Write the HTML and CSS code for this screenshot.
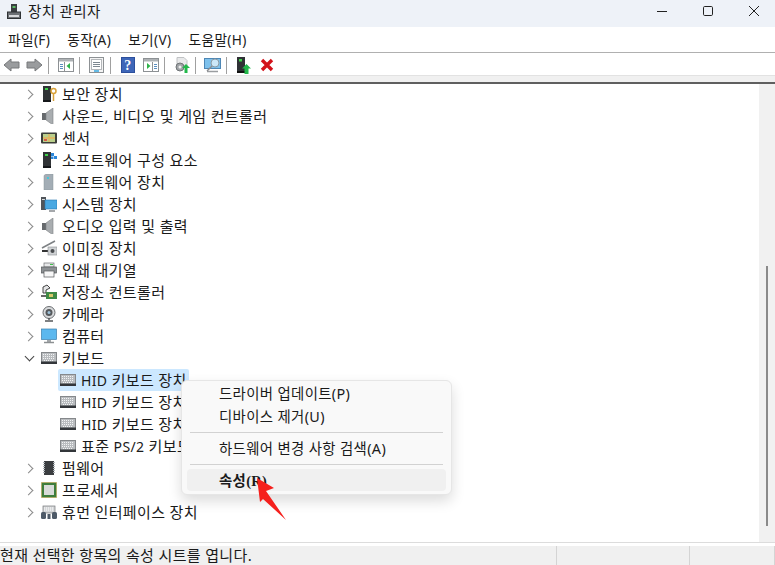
FILE: index.html
```html
<!DOCTYPE html>
<html lang="ko">
<head>
<meta charset="utf-8">
<title>장치 관리자</title>
<link rel="stylesheet" href="styles.css">
</head>
<body>
<svg class="defs" width="0" height="0">
  <defs>
    <symbol id="kbd" viewBox="0 0 16 16">
      <rect x="0.5" y="2.500" width="15" height="10" fill="#b9bcbf" stroke="#85888b"/>
      <rect x="0" y="11.500" width="16" height="2.500" fill="#33363a"/>
      <path d="M2 4.500h12M2 6.500h12M2 8.500h12M3 10.500h10" stroke="#f2f3f4" stroke-dasharray="1 1"/>
    </symbol>
    <symbol id="speaker" viewBox="0 0 16 16">
      <path d="M1 5h4v7H1z" fill="#666a6d"/>
      <path d="M5 5l7-5v17l-7-5z" fill="#a9adb0" stroke="#7d8184" stroke-width=".6"/>
    </symbol>
    <symbol id="tower" viewBox="0 0 16 16">
      <rect x="2" y="0" width="8" height="14" fill="#303336"/>
      <rect x="2" y="14" width="8" height="2" fill="#15171a"/>
      <rect x="4" y="2" width="3" height="2" fill="#3fd04a"/>
    </symbol>
  </defs>
</svg>

<div class="window">
  <header class="titlebar">
    <svg class="title-icon" width="14" height="15" viewBox="0 0 14 15">
      <rect x="4" y="0" width="6" height="8" fill="#3a3d40"/>
      <rect x="5.500" y="2" width="3" height="2" fill="#5dbb63"/>
      <rect x="0.500" y="8" width="13" height="6.500" fill="#6c7074" stroke="#2f3234"/>
      <rect x="2" y="11" width="10" height="2" fill="#d7d9db"/>
    </svg>
    <span class="title-text">장치 관리자</span>
    <div class="window-controls">
      <svg width="12" height="12" viewBox="0 0 12 12"><path d="M1 6.500h10" stroke="#222" stroke-width="1"/></svg>
      <svg width="12" height="12" viewBox="0 0 12 12"><rect x="1.500" y="1.500" width="9" height="9" rx="1.200" fill="none" stroke="#222"/></svg>
      <svg width="12" height="12" viewBox="0 0 12 12"><path d="M1 1l10 10M11 1L1 11" stroke="#222" stroke-width="1"/></svg>
    </div>
  </header>

  <nav class="menubar">
    <span class="menu-item">파일(F)</span>
    <span class="menu-item">동작(A)</span>
    <span class="menu-item">보기(V)</span>
    <span class="menu-item">도움말(H)</span>
  </nav>

  <div class="toolbar">
    <span class="tool"><svg width="17" height="14" viewBox="0 0 17 14"><path d="M1 7l7-6v3h8v6H8v3z" fill="#9a9c9e" stroke="#77797b"/></svg></span>
    <span class="tool"><svg width="17" height="14" viewBox="0 0 17 14"><path d="M16 7L9 1v3H1v6h8v3z" fill="#9a9c9e" stroke="#77797b"/></svg></span>
    <span class="tool-sep"></span>
    <span class="tool"><svg width="16" height="14" viewBox="0 0 16 14"><rect x=".5" y=".5" width="15" height="13" fill="#fff" stroke="#8d9194"/><rect x="1" y="1" width="14" height="2.500" fill="#aeb2b5"/><path d="M6.500 4v9" stroke="#8d9194"/><path d="M2 6.500h3M2 8.500h3M2 10.500h3" stroke="#5a8fc0"/><path d="M12 5v6L8.500 8z" fill="#2fb34a"/></svg></span>
    <span class="tool-sep"></span>
    <span class="tool"><svg width="15" height="16" viewBox="0 0 15 16"><rect x=".5" y=".5" width="14" height="15" fill="#f4f4f4" stroke="#8d9194"/><rect x="2.500" y="2.500" width="10" height="10" fill="#fff" stroke="#b4b7ba"/><path d="M4 5.500h7M4 7.500h7M4 9.500h7" stroke="#7d8790"/><path d="M5 14h5" stroke="#35a7e0" stroke-width="1.500"/></svg></span>
    <span class="tool-sep"></span>
    <span class="tool"><svg width="14" height="16" viewBox="0 0 14 16"><rect width="14" height="16" fill="#2c4f9c"/><rect x="1" y="1" width="12" height="14" fill="#3e66b8"/><text x="7" y="13" class="help-mark">?</text></svg></span>
    <span class="tool"><svg width="16" height="14" viewBox="0 0 16 14"><rect x=".5" y=".5" width="15" height="13" fill="#fff" stroke="#8d9194"/><rect x="1" y="1" width="14" height="2.500" fill="#aeb2b5"/><path d="M9.500 4v9" stroke="#8d9194"/><path d="M11 6.500h3M11 8.500h3M11 10.500h3" stroke="#5a8fc0"/><path d="M4 5v6l3.500-3z" fill="#2fb34a"/></svg></span>
    <span class="tool-sep"></span>
    <span class="tool"><svg width="16" height="16" viewBox="0 0 16 16"><path d="M3 .5h7l3 3V9H3z" fill="#e8e9ea" stroke="#c0c2c4"/><circle cx="6" cy="10" r="4" fill="#9fa3a6" stroke="#707477"/><circle cx="6" cy="10" r="1.500" fill="#eee"/><path d="M12 7l4 4h-2.500v5h-3v-5H8z" fill="#22b84a"/></svg></span>
    <span class="tool-sep"></span>
    <span class="tool"><svg width="17" height="16" viewBox="0 0 17 16"><rect x=".5" y="1.500" width="16" height="10" fill="#7ec1ec" stroke="#4e87b5"/><path d="M3 14.500h11" stroke="#9a9da0" stroke-width="1.500"/><circle cx="11" cy="6" r="4" fill="#cbe7f8" stroke="#8a9aa5"/><path d="M8 9l-5 5" stroke="#8b8d8f" stroke-width="1.500"/></svg></span>
    <span class="tool-sep"></span>
    <span class="tool"><svg width="15" height="17" viewBox="0 0 15 17"><rect x="1" y="0" width="8" height="14" fill="#2f3235"/><rect x="1" y="14" width="9" height="2" fill="#111"/><rect x="3" y="2" width="3" height="2.500" fill="#3fd04a"/><path d="M10.500 7l4.500 4.500h-2.500V17h-4v-5.500H6z" fill="#22b84a"/></svg></span>
    <span class="tool"><svg width="14" height="14" viewBox="0 0 14 14"><path d="M2 2l10 10M12 2L2 12" stroke="#d3121a" stroke-width="3.400"/></svg></span>
  </div>
  <div class="strip"></div>

  <div class="content">
    <main class="tree">
      <div class="row"><i class="chev"></i>
        <svg class="ico" viewBox="0 0 16 16"><use href="#tower"/><circle cx="12.500" cy="5" r="2.500" fill="none" stroke="#d9a23a" stroke-width="1.500"/><path d="M12.500 7.500V15" stroke="#d9a23a" stroke-width="1.500"/></svg>
        <span>보안 장치</span></div>
      <div class="row"><i class="chev"></i><svg class="ico" viewBox="0 0 16 16"><use href="#speaker"/></svg><span>사운드, 비디오 및 게임 컨트롤러</span></div>
      <div class="row"><i class="chev"></i>
        <svg class="ico" viewBox="0 0 16 16"><rect y="2.500" width="16" height="11" rx="1" fill="#3c3f3a"/><rect x="2" y="4" width="12" height="8" fill="#b9cf8c"/><path d="M8 4v8M2 8h12" stroke="#e6b35a" stroke-width="1.300"/><rect x="3" y="9" width="3" height="2" fill="#d85a4a"/></svg>
        <span>센서</span></div>
      <div class="row"><i class="chev"></i>
        <svg class="ico" viewBox="0 0 16 16"><use href="#tower"/><rect x="10" y="1" width="3" height="3" fill="#2b86d9"/><rect x="13" y="4" width="3" height="3" fill="#2b86d9"/><rect x="10" y="4.500" width="2.500" height="2.500" fill="#2b86d9"/></svg>
        <span>소프트웨어 구성 요소</span></div>
      <div class="row"><i class="chev"></i>
        <svg class="ico" viewBox="0 0 16 16"><path d="M3 1.500L5 0h7v16H3z" fill="#a3adb5" stroke="#8a949b" stroke-width=".5"/><rect x="6" y="3" width="2" height="2" fill="#47c6d8"/></svg>
        <span>소프트웨어 장치</span></div>
      <div class="row"><i class="chev"></i>
        <svg class="ico" viewBox="0 0 16 16"><rect x="0" y="1" width="5" height="13" fill="#50555a"/><rect x="1" y="3" width="3" height="1" fill="#ddd"/><rect x="4" y="4" width="12" height="9" fill="#49a8e2" stroke="#2a77ae" stroke-width=".6"/><path d="M8 15h6" stroke="#8f9396" stroke-width="1.600"/></svg>
        <span>시스템 장치</span></div>
      <div class="row"><i class="chev"></i><svg class="ico" viewBox="0 0 16 16"><use href="#speaker"/></svg><span>오디오 입력 및 출력</span></div>
      <div class="row"><i class="chev"></i>
        <svg class="ico" viewBox="0 0 16 16"><path d="M1 8L14 1" stroke="#7d8184" stroke-width="1.500"/><path d="M1 11h8" stroke="#333" stroke-width="2"/><rect x="7" y="7" width="9" height="8" fill="#cfd2d4" stroke="#8b8e91" stroke-width=".6"/><circle cx="11.500" cy="11" r="2" fill="#4a4d50"/></svg>
        <span>이미징 장치</span></div>
      <div class="row"><i class="chev"></i>
        <svg class="ico" viewBox="0 0 16 16"><rect x="3" y="1" width="10" height="4" fill="#e8e9ea" stroke="#6d7073" stroke-width=".7"/><rect x="0.500" y="5" width="15" height="6" fill="#8d9194" stroke="#55585b" stroke-width=".7"/><rect x="3" y="9" width="10" height="6" fill="#f7f7f7" stroke="#55585b" stroke-width=".7"/><rect x="9" y="2" width="3" height="1" fill="#3fc04a"/></svg>
        <span>인쇄 대기열</span></div>
      <div class="row"><i class="chev"></i>
        <svg class="ico" viewBox="0 0 16 16"><path d="M2 9V3l4-2 3 3-4 2v3z" fill="#e4e5e6" stroke="#333" stroke-width=".9"/><path d="M0 12h7" stroke="#333" stroke-width="1.500"/><rect x="5" y="8" width="11" height="7" fill="#3f8a45"/><rect x="8" y="10" width="4" height="3" fill="#d7c86a"/></svg>
        <span>저장소 컨트롤러</span></div>
      <div class="row"><i class="chev"></i>
        <svg class="ico" viewBox="0 0 16 16"><circle cx="8" cy="6.500" r="6" fill="#d8dadc" stroke="#6a6d70"/><circle cx="8" cy="6.500" r="3.500" fill="#55585b"/><circle cx="8" cy="6.500" r="1.500" fill="#9cc0d8"/><path d="M8 12v2M4 15h8" stroke="#55585b" stroke-width="1.500"/></svg>
        <span>카메라</span></div>
      <div class="row"><i class="chev"></i>
        <svg class="ico" viewBox="0 0 16 16"><rect x=".5" y="1" width="15" height="10.500" fill="#5cb8ee" stroke="#3a7fae" stroke-width=".7"/><path d="M6 12h4v2H6z" fill="#a3a7aa"/><path d="M3 14.500h10" stroke="#8c9093" stroke-width="1.500"/></svg>
        <span>컴퓨터</span></div>
      <div class="row"><i class="chev open"></i><svg class="ico" viewBox="0 0 16 16"><use href="#kbd"/></svg><span>키보드</span></div>
      <div class="row child"><div class="child-inner selected"><svg class="ico" viewBox="0 0 16 16"><use href="#kbd"/></svg><span><span class="latin">HID</span> 키보드 장치</span></div></div>
      <div class="row child"><div class="child-inner"><svg class="ico" viewBox="0 0 16 16"><use href="#kbd"/></svg><span><span class="latin">HID</span> 키보드 장치</span></div></div>
      <div class="row child"><div class="child-inner"><svg class="ico" viewBox="0 0 16 16"><use href="#kbd"/></svg><span><span class="latin">HID</span> 키보드 장치</span></div></div>
      <div class="row child"><div class="child-inner"><svg class="ico" viewBox="0 0 16 16"><use href="#kbd"/></svg><span>표준 <span class="latin">PS/2</span> 키보드</span></div></div>
      <div class="row"><i class="chev"></i>
        <svg class="ico" viewBox="0 0 16 16"><rect x="3" y="1" width="10" height="14" fill="#3a3d40"/><path d="M3 2v12M13 2v12" stroke="#aab0b4" stroke-width="2" stroke-dasharray="1 1"/></svg>
        <span>펌웨어</span></div>
      <div class="row"><i class="chev"></i>
        <svg class="ico" viewBox="0 0 16 16"><rect x=".5" y=".5" width="15" height="15" fill="#3e7d3c" stroke="#c09c3a" stroke-dasharray="1 1"/><rect x="3" y="3" width="10" height="10" fill="#d8dbd8"/></svg>
        <span>프로세서</span></div>
      <div class="row"><i class="chev"></i>
        <svg class="ico" viewBox="0 0 16 16"><rect x="2" y="2" width="12" height="7" fill="#d4d6d8" stroke="#74777a" stroke-width=".7"/><path d="M3 4h10M3 6h10" stroke="#fff" stroke-dasharray="1 1"/><rect x="0" y="8" width="5" height="7" rx="1.500" fill="#4e5a68"/><rect x="11" y="8" width="5" height="7" rx="1.500" fill="#4e5a68"/><rect x="6.500" y="10" width="3" height="5" fill="#4e5a68"/></svg>
        <span>휴먼 인터페이스 장치</span></div>
    </main>
    <div class="scrollbar"><div class="thumb"></div></div>
  </div>

  <footer class="statusbar">
    <div class="status-cell main">현재 선택한 항목의 속성 시트를 엽니다.</div>
    <div class="status-cell mid"></div>
    <div class="status-cell end"></div>
  </footer>
</div>

<div class="context-menu">
  <div class="cm-item">드라이버 업데이트(P)</div>
  <div class="cm-item">디바이스 제거(U)</div>
  <div class="cm-sep"></div>
  <div class="cm-item">하드웨어 변경 사항 검색(A)</div>
  <div class="cm-sep"></div>
  <div class="cm-item active">속성<span class="serif">(R)</span></div>
</div>

<svg class="pointer" width="34" height="46" viewBox="0 0 34 46"><path d="M1 1L18 11 10 14 30 43 7 22 4 25z" fill="#f5201d"/></svg>
</body>
</html>
```

FILE: styles.css
```css
* { box-sizing: border-box; }
html, body { margin: 0; padding: 0; }
body {
  width: 775px;
  height: 565px;
  overflow: hidden;
  position: relative;
  background: #fff;
  color: #1a1a1a;
  font-family: "Noto Sans", "Noto Sans CJK KR", sans-serif;
  font-size: 15px;
  letter-spacing: 0.35px;
}
.defs { position: absolute; }
.window { width: 775px; height: 565px; display: flex; flex-direction: column; }

.titlebar {
  height: 27px;
  background: #eef2f8;
  display: flex;
  align-items: center;
  padding-left: 7px;
  flex: none;
}
.title-icon { margin-right: 7px; margin-top: -5px; }
.title-text { font-size: 14.500px; line-height: 22px; margin-top: -5px; }
.window-controls {
  margin-left: auto;
  margin-top: -5px;
  display: flex;
  gap: 34px;
  padding-right: 15px;
}
.window-controls svg { display: block; }

.menubar {
  height: 26px;
  border-bottom: 1px solid #b0b0b0;
  display: flex;
  align-items: center;
  gap: 17px;
  padding-left: 8px;
  flex: none;
}
.menu-item { font-size: 13.700px; line-height: 24px; }

.toolbar {
  height: 22px;
  padding-top: 2px;
  display: flex;
  align-items: center;
  flex: none;
}
.tool { width: 23px; height: 20px; display: flex; align-items: center; justify-content: center; }
.tool-sep { width: 8px; height: 17px; position: relative; }
.tool-sep::before { content: ""; display: block; width: 1px; height: 17px; margin-left: 2px; background: #a0a0a0; }
.help-mark { font-family: "Liberation Serif", serif; font-weight: 700; font-size: 14px; fill: #fff; text-anchor: middle; }

.strip { height: 9px; background: #f0f0f0; border-top: 1px solid #e2e2e2; border-bottom: 2px solid #5f5f5f; flex: none; }

.content { flex: 1; display: flex; min-height: 0; border-bottom: 1px solid #dcdcdc; }
.tree { flex: 1; min-width: 0; margin-top: -1px; }
.row { height: 22px; display: flex; align-items: center; padding-left: 25px; white-space: nowrap; line-height: 22px; }
.chev { width: 8px; height: 8px; margin-right: 8px; display: block; position: relative; flex: none; }
.chev::before {
  content: "";
  position: absolute;
  left: 0;
  top: 1px;
  width: 6px;
  height: 6px;
  border-top: 1.400px solid #8a8a8a;
  border-right: 1.400px solid #8a8a8a;
  transform: rotate(45deg);
}
.chev.open::before {
  left: 1px;
  top: -1px;
  border-color: #444;
  transform: rotate(135deg);
}
.ico { width: 16px; height: 16px; margin-right: 5px; flex: none; }
.latin { font-size: 14px; }
.row.child { padding-left: 58px; }
.child-inner { height: 22px; width: 131px; display: flex; align-items: center; padding-left: 2px; border-radius: 2px; }
.child-inner.selected { background: #cce8ff; }

.scrollbar { width: 16px; background: #f1f1f1; position: relative; flex: none; }
.thumb { position: absolute; left: 7px; top: 182px; width: 2px; height: 260px; background: #8a8a8a; }

.statusbar { height: 22px; padding-top: 3px; display: flex; flex: none; background: #fff; }
.status-cell { background: #f0f0f0; height: 19px; font-size: 15px; line-height: 19px; border-right: 1px solid #d4d4d4; white-space: nowrap; }
.status-cell.main { width: 557px; }
.status-cell.mid { width: 133px; }
.status-cell.end { flex: 1; }

.context-menu {
  position: absolute;
  left: 181px;
  top: 380px;
  width: 271px;
  height: 115px;
  padding: 1px 5px;
  background: #f9f9f9;
  border: 1px solid #e6e6e6;
  border-radius: 6px;
  box-shadow: 0 6px 14px rgba(0, 0, 0, .14);
}
.cm-item { height: 23px; padding-left: 32px; line-height: 23px; font-size: 14.400px; border-radius: 4px; }
.cm-item.active { height: 22px; background: #f0f0f0; font-weight: 700; }
.cm-sep { height: 1px; margin: 4px 3px; background: #d2d2d2; }
.serif { font-family: "Liberation Serif", serif; }

.pointer { position: absolute; left: 256px; top: 477px; }
```
